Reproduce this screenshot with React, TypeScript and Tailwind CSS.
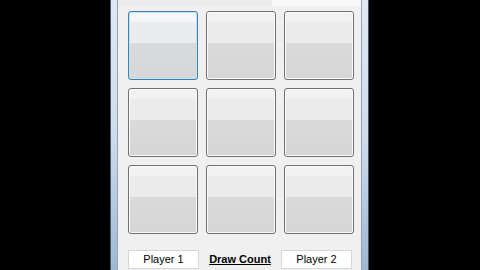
import React from 'react';

const cells = Array.from({ length: 9 }, (_, i) => i);

function Cell({ focused }: { focused: boolean }) {
  return (
    <button
      type="button"
      className={
        focused
          ? 'w-[70px] h-[69px] rounded-[3px] border border-[#3c7fb1] shadow-[inset_0_0_0_1px_#c4e5f6] bg-[linear-gradient(to_bottom,#f4f6f7_0%,#f4f6f7_14%,#ebeced_15%,#ebeced_46%,#d9dadb_47%,#d6d7d8_100%)]'
          : 'w-[70px] h-[69px] rounded-[3px] border border-[#707070] shadow-[inset_0_0_0_1px_#fbfbfb] bg-[linear-gradient(to_bottom,#f2f2f2_0%,#f2f2f2_14%,#ebebeb_15%,#ebebeb_46%,#dadada_47%,#d6d6d6_100%)]'
      }
    />
  );
}

export default function App() {
  return (
    <div className="w-[480px] h-[270px] bg-black flex overflow-hidden font-['Liberation_Sans',Arial,sans-serif]">
      <div className="ml-[110px] flex h-full">
        {/* left frame */}
        <div className="w-[8px] h-full border-l border-[#4a5a6a] border-r border-r-[#8ea5bd] bg-linear-to-b from-[#dfe8f2] via-[#cfdcea] to-[#9fb8d2]" />

        {/* client area */}
        <div className="w-[243px] h-full bg-[#f0f0f0] flex flex-col">
          <div className="h-[6px] flex">
            <div className="w-[154px] bg-[#ececec]" />
            <div className="flex-1 bg-[#f8f8f8]" />
          </div>

          <div className="pt-[5px] pl-[10px] grid grid-cols-[70px_70px_70px] gap-x-[8px] gap-y-[8px]">
            {cells.map((i) => (
              <Cell key={i} focused={i === 0} />
            ))}
          </div>

          <div className="mt-[16px] pl-[10px] flex items-center">
            <div className="w-[71px] h-[19px] bg-white border border-[#d6d6d6] flex items-center justify-center text-[11px] text-black">
              Player 1
            </div>
            <div className="w-[82px] text-center text-[11px] font-bold underline text-black">Draw Count</div>
            <div className="w-[71px] h-[19px] bg-white border border-[#d6d6d6] flex items-center justify-center text-[11px] text-black">
              Player 2
            </div>
          </div>
        </div>

        {/* right frame */}
        <div className="w-[8px] h-full border-l border-[#8ea5bd] border-r border-r-[#4a5a6a] bg-linear-to-b from-[#dfe8f2] via-[#cfdcea] to-[#9fb8d2]" />
      </div>
    </div>
  );
}
